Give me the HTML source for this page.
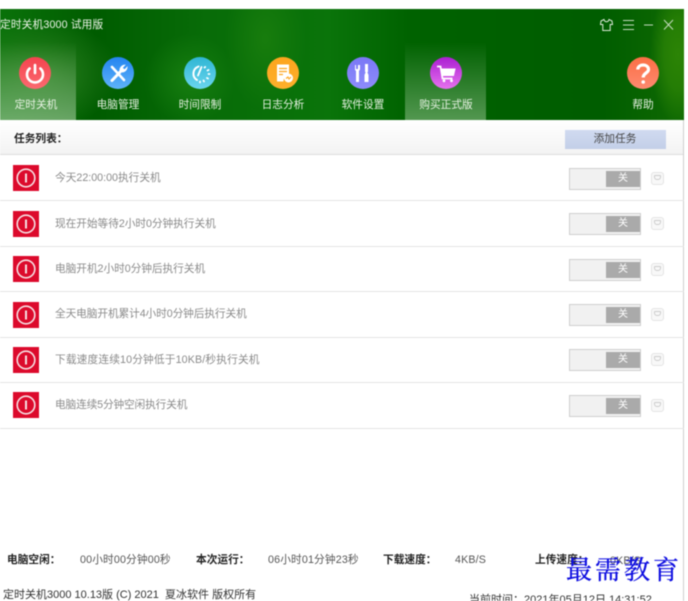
<!DOCTYPE html>
<html lang="zh">
<head>
<meta charset="utf-8">
<style>
html,body{margin:0;padding:0;background:#fff}
body{width:688px;height:601px;position:relative;overflow:hidden;font-family:"Liberation Sans","Noto Sans CJK SC",sans-serif;font-size:10.7px;color:#333}
.a{position:absolute;white-space:nowrap}
#wrap{position:absolute;left:0;top:0;width:688px;height:601px;overflow:hidden;filter:blur(.4px)}
#head{left:0;top:9px;width:684px;height:111px;overflow:hidden;white-space:normal;
background:
radial-gradient(ellipse 28px 70px at 678px 45px,#2c8406 0%,rgba(44,132,6,.75) 50%,rgba(44,132,6,0) 100%),
radial-gradient(ellipse 80px 55px at 40px 65px,rgba(60,140,45,.7),rgba(60,140,45,0) 100%),
radial-gradient(ellipse 45px 45px at 190px 70px,rgba(30,135,20,.7),rgba(30,135,20,0) 100%),
radial-gradient(ellipse 40px 70px at 265px 30px,rgba(30,130,15,.7),rgba(30,130,15,0) 100%),
linear-gradient(90deg,#0a720a 0,#005c00 14%,#086c08 30%,#0a740a 48%,#006200 60%,#005d00 88%,#106a03 100%)}
.tab{position:absolute;top:33px;height:78px}
.tab1{left:0;width:76px;background:linear-gradient(180deg,rgba(150,200,140,0),rgba(165,205,160,.62))}
.tab2{left:405px;width:81px;background:linear-gradient(180deg,rgba(150,200,140,0),rgba(165,205,160,.5))}
.ic{position:absolute;top:48px;width:32px;height:32px;border-radius:50%}
.ic svg{display:block}
.lb{position:absolute;top:89px;width:80px;margin-left:-40px;text-align:center;color:#e6f1e2;font-size:10.7px;line-height:14px}
.row{position:absolute;left:0;width:684px;height:1px;background:#e4e4e4}
.pw{position:absolute;left:13px;width:26px;height:26px;background:#dc0a2c}
.rt{position:absolute;left:55px;color:#8a8a8a;line-height:14px}
.tg{position:absolute;left:569px;width:70px;height:20px;background:#f1f1f1;border:1px solid #cfcfcf;box-sizing:content-box}
.tg b{position:absolute;right:0;top:2px;width:34px;height:16px;background:#aaa;color:#fff;text-align:center;font-weight:normal;font-size:10px;line-height:16px}
.sm{position:absolute;left:651px;width:11px;height:11px;border:1px solid #e4e4e4;border-radius:3px;background:#f8f8f8}
.sm:after{content:"";position:absolute;left:2px;top:2px;width:5px;height:3px;border:1px solid #ccc;border-radius:1px 1px 3px 3px}
.st{position:absolute;top:553px;line-height:14px;color:#555;letter-spacing:.15px}
.st.k{color:#222;font-weight:bold;letter-spacing:0}
</style>
</head>
<body>
<div id="wrap">
<div class="a" id="head">
  <div class="a" style="left:0;top:9px;color:#eef5ea;line-height:14px;letter-spacing:.15px">定时关机3000 试用版</div>
  <div class="tab tab1"></div>
  <div class="tab tab2"></div>

  <svg class="a" style="left:599px;top:9px" width="76" height="14" viewBox="0 0 76 14" fill="none" stroke="#dce9d8" stroke-width="1">
    <path d="M5 1.500 2 3 1.500 6.500 3.800 6.500 3.800 12.500 11.200 12.500 11.200 6.500 13.500 6.500 13 3 10 1.500C9.200 4.500 5.800 4.500 5 1.500Z"/>
    <path d="M24 2.500H35M24 7H35M24 11.500H35" stroke="#c4dabd"/>
    <path d="M45 7H54" stroke="#c4dabd"/>
    <path d="M65 2 74 11.500M74 2 65 11.500" stroke="#c4dabd"/>
  </svg>

  <div class="ic" style="left:19px;background:linear-gradient(180deg,#f5444f,#fb6a70)">
    <svg width="32" height="32" viewBox="0 0 32 32" fill="none" stroke="#fff" stroke-width="2.600" stroke-linecap="round"><path d="M10.600 11.500A8 8 0 1 0 21.400 11.500"/><path d="M16 8V16"/></svg>
  </div>
  <div class="lb" style="left:36px">定时关机</div>

  <div class="ic" style="left:102px;background:linear-gradient(180deg,#2384f0,#5fb4fa)">
    <svg width="32" height="32" viewBox="0 0 32 32" fill="none" stroke="#fff" stroke-linecap="round"><path d="M10 10 22 23" stroke-width="2.600"/><path d="M10 23.500 19.500 13.500" stroke-width="3"/><path d="M25 10.500 22.500 13 20.200 10.800 22.600 8.200A5 5 0 0 0 18 13.500L20.500 15A5 5 0 0 0 25 10.500Z" stroke-width="1" fill="#fff"/></svg>
  </div>
  <div class="lb" style="left:118px">电脑管理</div>

  <div class="ic" style="left:184px;background:linear-gradient(180deg,#2fb6d4,#6bd6ef)">
    <svg width="32" height="32" viewBox="0 0 32 32" fill="none" stroke="#fff" stroke-width="2" stroke-linecap="round"><path d="M13 23C8 20 8 12 14.500 9.500"/><path d="M14 18.500 17.500 10" stroke-width="1.800"/><path d="M20.500 10.500 21.200 10M23.500 13.500 24.500 13M24.500 17H25.500M23 21 24 21.500M19.500 23.500 20 24.500M16 24.500V25.500" stroke-width="1.800"/></svg>
  </div>
  <div class="lb" style="left:200px">时间限制</div>

  <div class="ic" style="left:267px;background:linear-gradient(180deg,#fda51e,#fdb02c)">
    <svg width="32" height="32" viewBox="0 0 32 32" fill="none"><path d="M10 7.500H22V18A6 6 0 0 0 16.500 24.500H10Z" fill="#fff"/><path d="M12 11.500H20M12 14.500H20M12 17.500H16" stroke="#fda51e" stroke-width="1.300"/><circle cx="21.500" cy="21" r="4.500" fill="#fff"/><path d="M19 21.500 21 20 22 22 24 20" stroke="#fda51e" stroke-width="1.100"/></svg>
  </div>
  <div class="lb" style="left:283px">日志分析</div>

  <div class="ic" style="left:347px;background:linear-gradient(180deg,#7a78f6,#8e8cfb)">
    <svg width="32" height="32" viewBox="0 0 32 32" fill="#fff"><path d="M9 8 9 12 11 12 11 8 13 8 13 12.500 12 14 12 25 9 25 9 14 8 13 8 8Z"/><path d="M18 7H21V15H18Z"/><path d="M18.700 15H20.300L21.500 18V25H17.500V18Z"/></svg>
  </div>
  <div class="lb" style="left:363px">软件设置</div>

  <div class="ic" style="left:430px;background:linear-gradient(180deg,#ab1fd2,#e672ee)">
    <svg width="32" height="32" viewBox="0 0 32 32" fill="none" stroke="#fff"><path d="M7 9.500H10.500L12.500 21.500H22.500" stroke-width="1.800"/><path d="M11 12H25L23.500 18.500H12.500Z" fill="#fff" stroke-width="1"/><circle cx="14" cy="23.800" r="1.400" fill="#fff" stroke="none"/><circle cx="21.500" cy="23.800" r="1.400" fill="#fff" stroke="none"/></svg>
  </div>
  <div class="lb" style="left:446px">购买正式版</div>

  <div class="ic" style="left:627px;background:linear-gradient(180deg,#fb6f45,#fe8a70)">
    <svg width="32" height="32" viewBox="0 0 32 32" fill="none" stroke="#fff" stroke-width="3.200"><path d="M10.800 12.500C10.800 6.500 21.500 6.500 21.500 12.500C21.500 16 16.200 16 16.200 20.500"/><circle cx="16.200" cy="25" r="1.800" fill="#fff" stroke="none"/></svg>
  </div>
  <div class="lb" style="left:643px">帮助</div>
</div>

<div class="a" style="left:0;top:120px;width:684px;height:35px;background:linear-gradient(180deg,#fff,#f3f3f3);border-bottom:1px solid #dedede;box-sizing:border-box"></div>
<div class="a" style="left:14px;top:132px;font-weight:bold;color:#222;line-height:14px">任务列表：</div>
<div class="a" style="left:565px;top:130px;width:101px;height:19px;background:linear-gradient(180deg,#d0daf0,#c3cfe8);color:#444;text-align:center;line-height:19px;text-indent:-1px">添加任务</div>

<div class="a" style="left:683px;top:120px;width:1px;height:481px;background:#cfcfcf"></div>

<div class="row" style="top:200px"></div>
<div class="row" style="top:246px"></div>
<div class="row" style="top:291px"></div>
<div class="row" style="top:337px"></div>
<div class="row" style="top:382px"></div>
<div class="row" style="top:428px"></div>

<div class="pw" style="top:165px"><svg width="26" height="26" viewBox="0 0 26 26" fill="none" stroke="#f6dfe2" stroke-width="1.600"><circle cx="13" cy="13" r="8.800"/><path d="M13 8.500V17.500" stroke-width="2"/></svg></div>
<div class="rt" style="top:171px">今天22:00:00执行关机</div>
<div class="tg" style="top:168px"><b>关</b></div><div class="sm" style="top:172px"></div>

<div class="pw" style="top:211px"><svg width="26" height="26" viewBox="0 0 26 26" fill="none" stroke="#f6dfe2" stroke-width="1.600"><circle cx="13" cy="13" r="8.800"/><path d="M13 8.500V17.500" stroke-width="2"/></svg></div>
<div class="rt" style="top:217px;letter-spacing:-.05px">现在开始等待2小时0分钟执行关机</div>
<div class="tg" style="top:213px"><b>关</b></div><div class="sm" style="top:217px"></div>

<div class="pw" style="top:256px"><svg width="26" height="26" viewBox="0 0 26 26" fill="none" stroke="#f6dfe2" stroke-width="1.600"><circle cx="13" cy="13" r="8.800"/><path d="M13 8.500V17.500" stroke-width="2"/></svg></div>
<div class="rt" style="top:262px;letter-spacing:-.05px">电脑开机2小时0分钟后执行关机</div>
<div class="tg" style="top:259px"><b>关</b></div><div class="sm" style="top:263px"></div>

<div class="pw" style="top:302px"><svg width="26" height="26" viewBox="0 0 26 26" fill="none" stroke="#f6dfe2" stroke-width="1.600"><circle cx="13" cy="13" r="8.800"/><path d="M13 8.500V17.500" stroke-width="2"/></svg></div>
<div class="rt" style="top:307px;letter-spacing:-.1px">全天电脑开机累计4小时0分钟后执行关机</div>
<div class="tg" style="top:304px"><b>关</b></div><div class="sm" style="top:308px"></div>

<div class="pw" style="top:347px"><svg width="26" height="26" viewBox="0 0 26 26" fill="none" stroke="#f6dfe2" stroke-width="1.600"><circle cx="13" cy="13" r="8.800"/><path d="M13 8.500V17.500" stroke-width="2"/></svg></div>
<div class="rt" style="top:353px;letter-spacing:.15px">下载速度连续10分钟低于10KB/秒执行关机</div>
<div class="tg" style="top:349px"><b>关</b></div><div class="sm" style="top:353px"></div>

<div class="pw" style="top:392px"><svg width="26" height="26" viewBox="0 0 26 26" fill="none" stroke="#f6dfe2" stroke-width="1.600"><circle cx="13" cy="13" r="8.800"/><path d="M13 8.500V17.500" stroke-width="2"/></svg></div>
<div class="rt" style="top:398px;letter-spacing:-.15px">电脑连续5分钟空闲执行关机</div>
<div class="tg" style="top:395px"><b>关</b></div><div class="sm" style="top:399px"></div>

<div class="st k" style="left:7px">电脑空闲：</div>
<div class="st" style="left:80px">00小时00分钟00秒</div>
<div class="st k" style="left:196px">本次运行：</div>
<div class="st" style="left:268px">06小时01分钟23秒</div>
<div class="st k" style="left:383px">下载速度：</div>
<div class="st" style="left:455px">4KB/S</div>
<div class="st k" style="left:535px">上传速度：</div>
<div class="st" style="left:610px;top:554px">0KB/S</div>

<div class="a" style="left:3px;top:588px;color:#333;line-height:14px;font-size:11px">定时关机3000 10.13版 (C) 2021&nbsp; 夏冰软件 版权所有</div>
<div class="a" style="left:469px;top:593px;color:#333;line-height:14px;font-size:11px">当前时间：2021年05月12日 14:31:52</div>

<div class="a" style="left:566px;top:554px;font-family:'Liberation Serif','Noto Serif CJK SC',serif;font-size:26px;line-height:34px;letter-spacing:3px;color:#0c0ce0;-webkit-text-stroke:.35px #0c0ce0">最需教育</div>
</div>
</body>
</html>
